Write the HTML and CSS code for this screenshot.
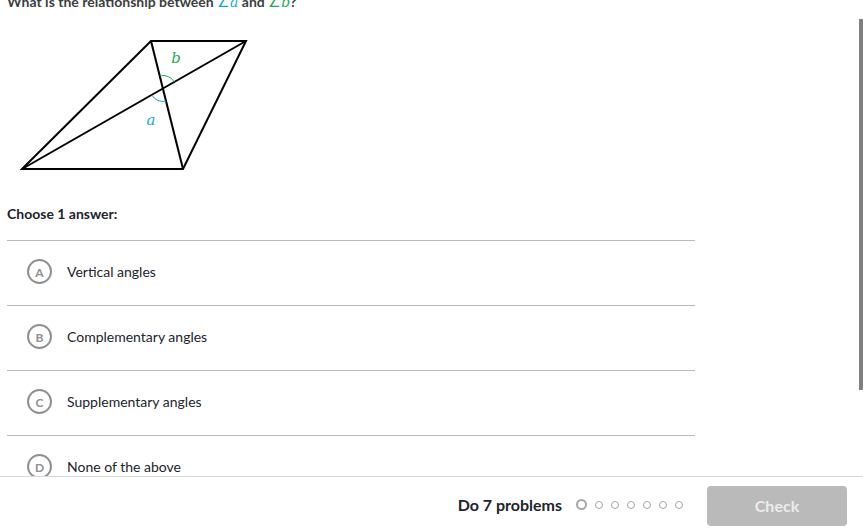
FILE: index.html
```html
<!DOCTYPE html>
<html>
<head>
<meta charset="utf-8">
<link rel="stylesheet" href="styles.css">
</head>
<body>
<div class="page">
  <p class="question">What is the relationship between <span class="ang-a">∠<i>a</i></span> and <span class="ang-b">∠<i>b</i></span>?</p>
  <svg class="diagram" width="260" height="150" viewBox="7 30 260 150">
    <g fill="none" stroke="#000" stroke-width="2" stroke-linejoin="miter">
      <polygon points="22,169 151,41 246,41 183,169"/>
      <line x1="22" y1="169" x2="246" y2="41"/>
      <line x1="151" y1="41" x2="183" y2="169"/>
    </g>
    <path d="M159.8 75.9 A13 13 0 0 1 174.3 82" fill="none" stroke="#1fab54" stroke-width="1"/>
    <path d="M166.2 101.1 A13 13 0 0 1 151.7 94.9" fill="none" stroke="#11accd" stroke-width="1"/>
    <text x="176" y="63" class="lbl-b" text-anchor="middle">b</text>
    <text x="151" y="125" class="lbl-a" text-anchor="middle">a</text>
  </svg>
  <p class="choose">Choose 1 answer:</p>
  <ul class="choices">
    <li class="choice"><span class="letter">A</span><span class="ctext">Vertical angles</span></li>
    <li class="choice"><span class="letter">B</span><span class="ctext">Complementary angles</span></li>
    <li class="choice"><span class="letter">C</span><span class="ctext">Supplementary angles</span></li>
    <li class="choice"><span class="letter">D</span><span class="ctext">None of the above</span></li>
  </ul>
</div>
<div class="footer">
  <span class="do">Do 7 problems</span>
  <span class="dots">
    <span class="dot big"></span><span class="dot"></span><span class="dot"></span><span class="dot"></span><span class="dot"></span><span class="dot"></span><span class="dot"></span>
  </span>
  <button class="check">Check</button>
</div>
<div class="scrollthumb"></div>
</body>
</html>
```
FILE: styles.css
```css
html, body {
  margin: 0;
  padding: 0;
  background: #fff;
  overflow: hidden;
}
body {
  font-family: Lato, "Noto Sans", sans-serif;
  color: #21242c;
  height: 532px;
}
.page {
  width: 688px;
  padding-left: 7px;
}
.question {
  margin: -8px 0 0 0;
  font-size: 14px;
  font-weight: 700;
  line-height: 20px;
  color: #3b3e40;
}
.question i {
  font-family: "DejaVu Serif", "Liberation Serif", serif;
  font-weight: 400;
}
.ang-a { color: #11accd; font-weight: 400; }
.ang-b { color: #1fab54; font-weight: 400; }
.diagram {
  display: block;
  margin-top: 18px;
}
.lbl-a, .lbl-b {
  font-family: "DejaVu Serif", "Liberation Serif", serif;
  font-style: italic;
  font-size: 15px;
}
.lbl-a { fill: #11accd; }
.lbl-b { fill: #1fab54; }
.choose {
  margin: 26px 0 0 0;
  font-size: 14px;
  font-weight: 700;
  line-height: 16px;
  color: #21242c;
}
.choices {
  list-style: none;
  margin: 18px 0 0 0;
  padding: 0;
  border-top: 1px solid #bababe;
}
.choice {
  display: flex;
  align-items: center;
  height: 61px;
  padding-bottom: 3px;
  border-bottom: 1px solid #bababe;
  padding-left: 20px;
}
.letter {
  box-sizing: border-box;
  width: 25px;
  height: 25px;
  border: 2px solid #8e9093;
  border-radius: 50%;
  display: flex;
  align-items: center;
  justify-content: center;
  font-size: 12px;
  font-weight: 700;
  color: #8e9093;
  margin-right: 15px;
  padding-top: 1px;
}
.ctext {
  font-size: 14px;
  color: #21242c;
}
.footer {
  position: fixed;
  left: 0;
  right: 0;
  bottom: 0;
  height: 55px;
  background: #fff;
  border-top: 1px solid #d6d8da;
  display: flex;
  align-items: center;
  justify-content: flex-end;
  padding-right: 16px;
}
.do {
  font-size: 16px;
  font-weight: 700;
  color: #21242c;
  margin-right: 14px;
}
.dots {
  display: flex;
  align-items: center;
  gap: 8px;
  margin-right: 24px;
}
.dot {
  box-sizing: border-box;
  width: 8px;
  height: 8px;
  border: 1.5px solid #a6a6a6;
  border-radius: 50%;
}
.dot.big {
  width: 11px;
  height: 11px;
  border-width: 2px;
}
.check {
  width: 140px;
  height: 40px;
  border: none;
  border-radius: 4px;
  background: #bababa;
  color: #ececec;
  font-family: Lato, sans-serif;
  font-size: 16px;
  font-weight: 700;
  margin-top: 2px;
}
.scrollthumb {
  position: fixed;
  left: 859px;
  top: 19px;
  width: 4px;
  height: 371px;
  background: #808080;
}
```
